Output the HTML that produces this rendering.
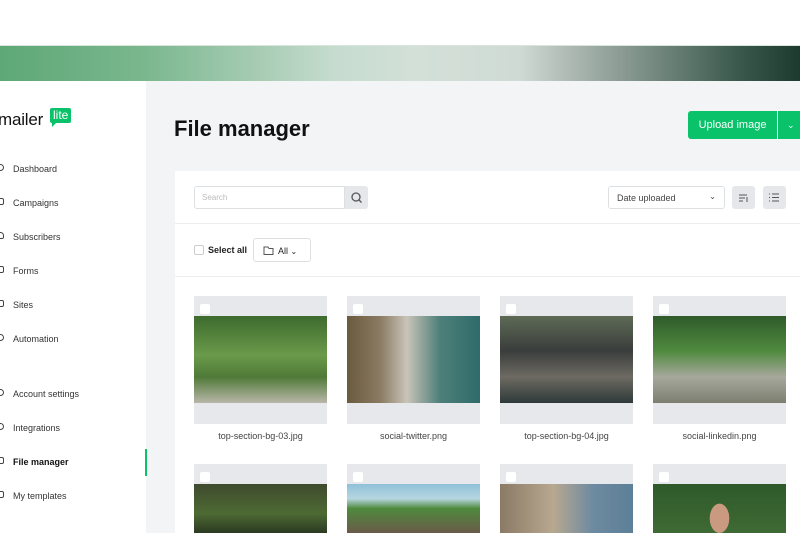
<!DOCTYPE html>
<html style="width:800px;height:533px;overflow:hidden"><head><meta charset="utf-8"><style>
*{box-sizing:border-box;margin:0;padding:0}
body{width:800px;height:533px;overflow:hidden;background:#fff;font-family:"Liberation Sans",sans-serif;position:relative;color:#222}
.band{position:absolute;left:0;top:45px;width:800px;height:36px;background:linear-gradient(90deg,#5ea876 0%,#7ab78e 18%,#a9cdb5 33%,#c6dccf 42%,#d3e0d8 52%,#cfdad4 65%,#aab5b0 72%,#73887e 82%,#3c5a4d 92%,#1d3a2e 100%);border-top:1px solid #d8e4dc}
.side{position:absolute;left:0;top:81px;width:146px;height:452px;background:#fff}
.main{position:absolute;left:146px;top:81px;width:654px;height:452px;background:#f3f4f6}
.logo{position:absolute;left:-2px;top:110px;font-size:17px;color:#111;letter-spacing:-.2px}
.lite{position:absolute;left:50px;top:108px;background:#09c269;color:#fff;font-size:12px;padding:0 3px;height:15px;line-height:15px;border-radius:2px}
.lite:after{content:"";position:absolute;left:2px;bottom:-4px;border-left:4px solid #09c269;border-bottom:4px solid transparent}
.nav{position:absolute;left:13px;font-size:9px;color:#333}
.ic{position:absolute;left:-3px;width:7px;height:7px;border:1.2px solid #444;border-radius:2px}
.act{position:absolute;left:145px;top:449px;width:2px;height:27px;background:#09c269}
h1{position:absolute;left:174px;top:116px;font-size:22px;font-weight:600;color:#111}
.up{position:absolute;left:688px;top:111px;width:89px;height:28px;background:#09c269;color:#fff;font-size:11px;text-align:center;line-height:28px;border-radius:3px 0 0 3px}
.upd{position:absolute;left:778px;top:111px;width:24px;height:28px;background:#09c269;color:#fff;font-size:9px;line-height:28px;padding-left:9px}
.panel{position:absolute;left:175px;top:171px;width:625px;height:362px;background:#fff}
.hr{position:absolute;left:175px;width:625px;height:1px;background:#eceef0}
.search{position:absolute;left:194px;top:186px;width:151px;height:23px;border:1px solid #dde0e3;border-radius:3px 0 0 3px;font-size:8px;color:#bbb;padding:6px 7px}
.sbtn{position:absolute;left:345px;top:186px;width:23px;height:23px;background:#e5e7ea;border-radius:0 3px 3px 0}
.sel{position:absolute;left:608px;top:186px;width:117px;height:23px;border:1px solid #dde0e3;border-radius:3px;font-size:9px;color:#444;padding:6px 8px}
.ib{position:absolute;top:186px;width:23px;height:23px;background:#e5e7ea;border-radius:3px}
.cb{position:absolute;width:10px;height:10px;border:1px solid #ccc;border-radius:2px;background:#fff}
.all{position:absolute;left:253px;top:238px;width:58px;height:24px;border:1px solid #dde0e3;border-radius:3px;font-size:9px;padding:7px 0 0 24px}
.card{position:absolute;width:133px;height:128px;background:#e6e8eb}
.card .cb{left:6px;top:8px;border:none}
.img{position:absolute;left:0;top:20px;width:133px;height:87px}
.lbl{position:absolute;width:133px;text-align:center;font-size:9px;color:#444}
</style></head><body>
<div class="band"></div>
<div class="side"></div><div class="main"></div>
<div class="logo">mailer</div><div class="lite">lite</div>
<div class="nav" style="top:164px"><span class="ic" style="left:-16px;border-radius:50%"></span>Dashboard</div>
<div class="nav" style="top:198px"><span class="ic" style="left:-16px"></span>Campaigns</div>
<div class="nav" style="top:232px"><span class="ic" style="left:-16px;border-radius:50% 50% 2px 2px"></span>Subscribers</div>
<div class="nav" style="top:266px"><span class="ic" style="left:-16px"></span>Forms</div>
<div class="nav" style="top:300px"><span class="ic" style="left:-16px"></span>Sites</div>
<div class="nav" style="top:334px"><span class="ic" style="left:-16px;border-radius:50%"></span>Automation</div>
<div class="nav" style="top:389px"><span class="ic" style="left:-16px;border-radius:50%"></span>Account settings</div>
<div class="nav" style="top:423px"><span class="ic" style="left:-16px;border-radius:50%"></span>Integrations</div>
<div class="nav" style="top:457px;font-weight:700;color:#111"><span class="ic" style="left:-16px"></span>File manager</div>
<div class="nav" style="top:491px"><span class="ic" style="left:-16px"></span>My templates</div>
<div class="act"></div>
<h1>File manager</h1>
<div class="up">Upload image</div><div class="upd">⌄</div>
<div class="panel"></div>
<div class="hr" style="top:223px"></div><div class="hr" style="top:276px"></div>
<div class="search">Search</div>
<div class="sbtn"><svg width="23" height="23"><circle cx="11" cy="11" r="4" fill="none" stroke="#555" stroke-width="1.3"/><line x1="14" y1="14" x2="16.5" y2="16.5" stroke="#555" stroke-width="1.3"/></svg></div>
<div class="sel">Date uploaded<span style="position:absolute;right:8px;top:5px;font-size:8px">⌄</span></div>
<div class="ib" style="left:732px"><svg width="23" height="23" stroke="#555" stroke-width="1"><line x1="7" y1="9" x2="15" y2="9"/><line x1="7" y1="12" x2="13" y2="12"/><line x1="7" y1="15" x2="11" y2="15"/><line x1="15" y1="11" x2="15" y2="16"/></svg></div>
<div class="ib" style="left:763px"><svg width="23" height="23" stroke="#555" stroke-width="1"><line x1="9" y1="8" x2="16" y2="8"/><line x1="9" y1="11.5" x2="16" y2="11.5"/><line x1="9" y1="15" x2="16" y2="15"/><line x1="6" y1="8" x2="7" y2="8"/><line x1="6" y1="11.5" x2="7" y2="11.5"/><line x1="6" y1="15" x2="7" y2="15"/></svg></div>
<div class="cb" style="left:194px;top:245px"></div>
<div style="position:absolute;left:208px;top:245px;font-size:9px;font-weight:600">Select all</div>
<div class="all"><svg style="position:absolute;left:9px;top:7px" width="11" height="9"><path d="M1 1h4l1 1.5h4v6H1z" fill="none" stroke="#555"/></svg>All <span style="font-size:8px">⌄</span></div>

<div class="card" style="left:194px;top:296px"><div class="cb"></div><div class="img" style="background:linear-gradient(180deg,#3d6b2e 0%,#6a9a4a 45%,#4f7a38 70%,#b9b6a8 100%)"></div></div>
<div class="card" style="left:347px;top:296px"><div class="cb"></div><div class="img" style="background:linear-gradient(90deg,#6b5a3e 0%,#8a7b62 25%,#c9c3b8 45%,#4d7f79 70%,#2f6b6a 100%)"></div></div>
<div class="card" style="left:500px;top:296px"><div class="cb"></div><div class="img" style="background:linear-gradient(180deg,#5e6a55 0%,#3a3d3c 40%,#6d6a62 70%,#2e3a3a 100%)"></div></div>
<div class="card" style="left:653px;top:296px"><div class="cb"></div><div class="img" style="background:linear-gradient(180deg,#2f5a2a 0%,#4f8a3e 40%,#a7a89c 70%,#7c7f70 100%)"></div></div>
<div class="lbl" style="left:194px;top:431px">top-section-bg-03.jpg</div>
<div class="lbl" style="left:347px;top:431px">social-twitter.png</div>
<div class="lbl" style="left:500px;top:431px">top-section-bg-04.jpg</div>
<div class="lbl" style="left:653px;top:431px">social-linkedin.png</div>

<div class="card" style="left:194px;top:464px;height:69px"><div class="cb"></div><div class="img" style="height:49px;background:linear-gradient(180deg,#3f4a2e,#4d6a33 60%,#2b3a22)"></div></div>
<div class="card" style="left:347px;top:464px;height:69px"><div class="cb"></div><div class="img" style="height:49px;background:linear-gradient(180deg,#8fc0d8 0%,#b7d6e0 30%,#4f8a3e 50%,#6a5a48 100%)"></div></div>
<div class="card" style="left:500px;top:464px;height:69px"><div class="cb"></div><div class="img" style="height:49px;background:linear-gradient(90deg,#8a7a66 0%,#b8a890 40%,#6d8aa0 70%,#5d7f98 100%)"></div></div>
<div class="card" style="left:653px;top:464px;height:69px"><div class="cb"></div><div class="img" style="height:49px;background:radial-gradient(ellipse 16px 24px at 50% 70%,#c99a80 60%,transparent 62%),linear-gradient(180deg,#2e5a2a,#3f6a35)"></div></div>
</body></html>
